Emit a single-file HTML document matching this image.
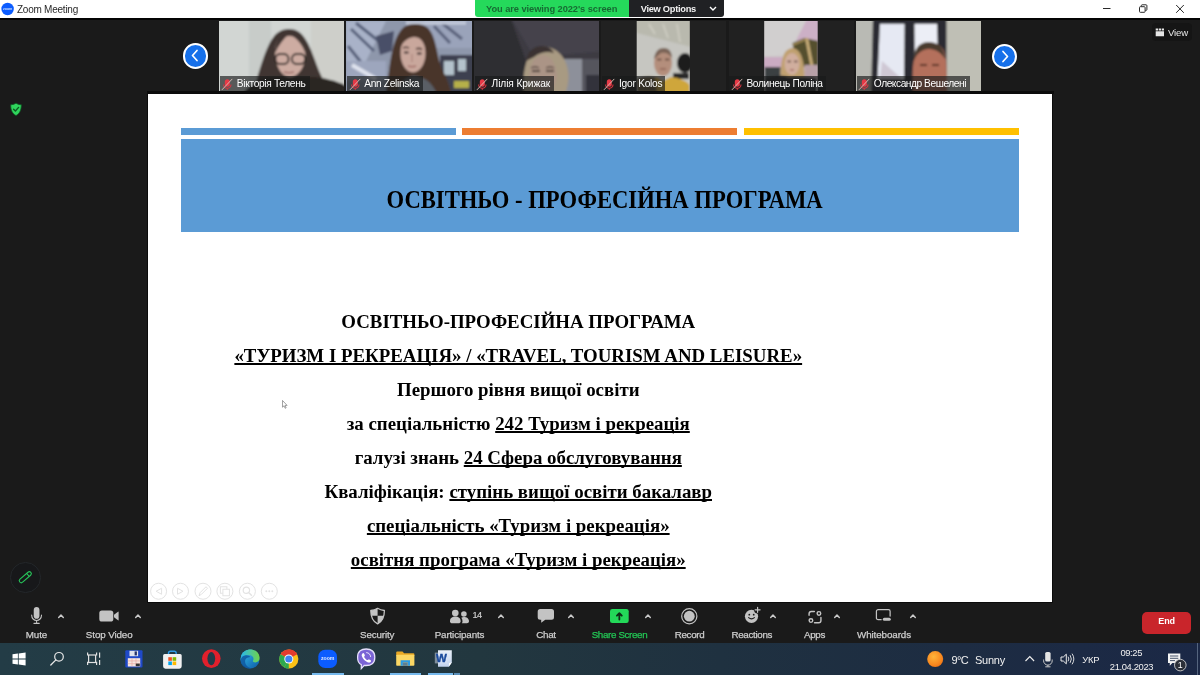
<!DOCTYPE html>
<html lang="uk">
<head>
<meta charset="utf-8">
<title>Zoom Meeting</title>
<style>
*{box-sizing:border-box;margin:0;padding:0}
html,body{width:1200px;height:675px;overflow:hidden;background:#1a1a1a}
body{will-change:transform;position:relative;font-family:"Liberation Sans","DejaVu Sans",sans-serif;color:#fff}
.abs{position:absolute}
#titlebar{left:0;top:0;width:1200px;height:18px;background:#fff;color:#222}
#titlebar .ttl{left:17px;top:3px;font-size:10px;line-height:13px;color:#2a2a2a;white-space:nowrap}
#banner{left:475px;top:0;width:154px;height:16.7px;background:#25d95b;border-radius:0 0 0 3px;color:#176a33;font-weight:bold;font-size:9.3px;line-height:18.2px;padding-left:11px;white-space:nowrap}
#viewopt{left:629px;top:0;width:94.5px;height:16.5px;background:#202124;border-radius:0 0 3px 0;color:#f2f2f2;font-weight:bold;font-size:9.3px;line-height:18.4px;white-space:nowrap;padding-left:11.7px}
#strip{left:0;top:18px;width:1200px;height:76px;background:#1a1a1a}
.tile{top:20.6px;width:126px;height:70.6px;background:#212121;overflow:hidden}
.tile svg{position:absolute;left:0;top:0}
.nm{position:absolute;left:.8px;top:55.4px;height:14.6px;background:rgba(24,26,26,.66);color:#fff;font-size:10.2px;line-height:16.8px;padding:0 0 0 17px;white-space:nowrap;overflow:hidden}
.nm svg{position:absolute;left:1.4px;top:1.6px}
.navb{width:25.4px;height:25.4px;border-radius:50%;background:#1670ea;border:2.2px solid #fff}
#slide{left:148px;top:94px;width:904px;height:508px;background:#fff;color:#000;outline:1.5px solid #0b0b0b;font-family:"Liberation Serif","DejaVu Serif",serif;font-weight:bold}
#slide .bar{position:absolute;top:34px;height:7px}
#hdr{position:absolute;left:33px;top:45px;width:838px;height:93px;background:#5b9bd5}
#hdr span{position:absolute;left:205.5px;top:48px;font-size:22.65px;line-height:28px;white-space:nowrap;transform:scaleY(1.1);transform-origin:50% 80%}
.ln{position:absolute;left:0;width:740.5px;margin-top:.4px;text-align:center;font-size:18.86px;line-height:24px;white-space:nowrap}
.ln u{text-decoration-thickness:1.6px;text-underline-offset:1.2px;text-decoration-skip-ink:none}
#tb{left:0;top:603px;width:1200px;height:39px;background:#1a1a1a}
.tbl{position:absolute;top:628px;font-size:9.8px;line-height:13px;color:#d2d2d2;white-space:nowrap;transform:translateX(-50%);-webkit-text-stroke:.25px currentColor}
#task{left:0;top:643px;width:1200px;height:32px;background:linear-gradient(90deg,#233c46 0%,#22373f 40%,#1f3140 60%,#1d2c42 80%,#1b2846 100%)}
#end{left:1142.4px;top:612.4px;width:48.3px;height:21.3px;border-radius:5px;background:#c9252b;color:#fff;font-weight:bold;font-size:9px;line-height:19.6px;text-align:center;letter-spacing:-.2px}
.tray{color:#f1f1f1;white-space:nowrap}
</style>
</head>
<body>
<!-- title bar -->
<div id="titlebar" class="abs">
  <svg class="abs" style="left:1px;top:2px" width="14" height="14" viewBox="0 0 14 14"><circle cx="6.6" cy="7" r="6.2" fill="#0b5cff"/><text x="6.6" y="8.2" font-size="3.6" font-family="Liberation Sans, sans-serif" font-weight="bold" fill="#cfe0ff" text-anchor="middle">zoom</text></svg>
  <div class="abs ttl"><span style="letter-spacing:-0.243px">Zoom Meeting</span></div>
  <svg class="abs" style="left:1095px;top:0" width="105" height="18" viewBox="0 0 105 18"><g stroke="#2a2a2a" stroke-width="1" fill="none"><path d="M8 8.5h7.5"/><rect x="44.5" y="6.7" width="5.6" height="5.6" rx=".8"/><path d="M46.3 6.5V5.6a.8.8 0 0 1 .8-.8h4a.8.8 0 0 1 .8.8v4a.8.8 0 0 1-.8.8h-.8"/><path d="M81.2 5l7.6 7.8M88.8 5l-7.6 7.8"/></g></svg>
</div>
<div id="banner" class="abs"><span style="letter-spacing:-0.069px">You are viewing 2022's screen</span></div>
<div id="viewopt" class="abs"><span style="letter-spacing:-0.285px">View Options</span><svg class="abs" style="left:80px;top:6px" width="8" height="6" viewBox="0 0 8 6"><path d="M1 1l3 3 3-3" stroke="#fff" stroke-width="1.4" fill="none"/></svg></div>

<!-- video strip -->
<div id="strip" class="abs"></div><div class="abs" style="left:0;top:18px;width:1200px;height:2.2px;background:#040404"></div><div class="abs" style="left:146.5px;top:91.2px;width:907px;height:3px;background:#0b0b0b"></div>
<div class="abs" style="left:1151.5px;top:23px;width:40.5px;height:18px;border-radius:4px;background:#151515"></div>
<svg class="abs" style="left:1155px;top:28px" width="10" height="9" viewBox="0 0 10 9"><path d="M.7.6h2.3v1.9H.7zM3.7.600h2.3v1.9H3.7zM6.7.600h2.3v1.9H6.7zM.7 3.2h8.3v5H.7z" fill="#e6e6e6"/></svg>
<div class="abs" style="left:1168px;top:26px;font-size:9.6px;line-height:13px;color:#e8e8e8;white-space:nowrap"><span style="letter-spacing:-0.156px">View</span></div>
<div class="abs navb" style="left:183px;top:43.4px"><svg class="abs" style="left:5px;top:4px" width="10" height="13" viewBox="0 0 10 13"><path d="M7 1.5L2.5 6.5 7 11.5" stroke="#fff" stroke-width="1.7" fill="none" stroke-linecap="round" stroke-linejoin="round"/></svg></div>
<div class="abs navb" style="left:992px;top:43.5px"><svg class="abs" style="left:6px;top:4px" width="10" height="13" viewBox="0 0 10 13"><path d="M3 1.5L7.5 6.5 3 11.5" stroke="#fff" stroke-width="1.7" fill="none" stroke-linecap="round" stroke-linejoin="round"/></svg></div>

<div class="abs tile" style="left:219px;width:125.2px"><svg width="126" height="71" viewBox="0 0 126 71"><defs><filter id="bl0" x="-10%" y="-10%" width="120%" height="120%"><feGaussianBlur stdDeviation="1.3"/></filter><clipPath id="cp0"><rect x="0" y="0" width="126" height="71"/></clipPath></defs><g clip-path="url(#cp0)"><g filter="url(#bl0)"><rect x="-5" y="-5" width="136" height="81" fill="#d2d6d3"/><rect x="30" y="-5" width="22" height="81" fill="#c8ccc9"/><rect x="92" y="-5" width="40" height="81" fill="#cecfca"/>
<path d="M34 71C40 52 46 26 56 14 62 7 74 6 80 11 92 20 96 44 104 58L130 68V80H20z" fill="#3f3431"/>
<path d="M20 78C30 62 42 58 52 56H96C112 58 124 62 132 68V80H20z" fill="#2a2524"/>
<path d="M56 30C56 20 62 15 70 15 79 15 86 21 86.5 32 87 44 80 56 71 56 62 56 56 44 56 30z" fill="#cdaca2"/>
<path d="M56 32C56 20 62 13 70 13 64 18 60 24 56 32zM70 13C80 13 87 22 87 34 84 24 78 17 70 13z" fill="#3f3431"/>
<rect x="56.5" y="33" width="13" height="10" rx="4.5" fill="none" stroke="#2c2523" stroke-width="1.8"/><rect x="73" y="33" width="13" height="10" rx="4.5" fill="none" stroke="#2c2523" stroke-width="1.8"/>
<path d="M65 51q5 1.5 10 0" stroke="#9a6a66" stroke-width="1.5" fill="none"/></g></g></svg><div class="nm" style="width:90px"><svg width="13" height="13" viewBox="0 0 13 13"><rect x="3.8" y="1.3" width="5" height="7.4" rx="2.5" fill="#e63946"/><path d="M2.6 6.5a3.7 3.7 0 0 0 7.4 0" stroke="#d8343f" stroke-width="1.1" fill="none"/><path d="M6.3 10.2v1.6" stroke="#d8343f" stroke-width="1.2"/><path d="M11 1.2L1.2 11.6" stroke="#dcc4bc" stroke-width=".9" stroke-linecap="round"/></svg><span style="letter-spacing:-0.337px">Вікторія Телень</span></div></div>
<div class="abs tile" style="left:346.4px;width:125.2px"><svg width="126" height="71" viewBox="0 0 126 71"><defs><filter id="bl1" x="-10%" y="-10%" width="120%" height="120%"><feGaussianBlur stdDeviation="1.3"/></filter><clipPath id="cp1"><rect x="0" y="0" width="126" height="71"/></clipPath></defs><g clip-path="url(#cp1)"><g filter="url(#bl1)"><rect x="-5" y="-5" width="136" height="81" fill="#8e97ab"/>
<path d="M0 0h40L20 40 0 55z" fill="#a9b2c8"/><path d="M5 8L28 30M10 2L35 22M2 25L22 50" stroke="#56607a" stroke-width="3"/>
<path d="M30 15L48 10 46 30 34 34z" fill="#4a4f68"/><rect x="78" y="-3" width="50" height="30" fill="#9aa3ba"/><path d="M88 5L104 22M96 2L116 18" stroke="#5a627c" stroke-width="3"/>
<rect x="0" y="40" width="40" height="20" fill="#9da6bd"/><path d="M6 44L30 58" stroke="#dfe3ee" stroke-width="4"/><path d="M60 2L120 2" stroke="#c5ccdc" stroke-width="3"/>
<rect x="94" y="34" width="36" height="40" fill="#3c4150"/><path d="M98 40h10v14h-10zM112 38h8v12h-8z" fill="#b4c2cc"/><rect x="108" y="60" width="15" height="7" fill="#b5b04a"/>
<path d="M40 71C44 50 44 18 58 6 64 2 76 2 82 7 92 18 90 38 98 52 102 60 104 66 106 75H38z" fill="#4a362c"/>
<ellipse cx="67" cy="32" rx="12.5" ry="19.5" fill="#c9a79c"/>
<path d="M54 28C56 14 64 9 72 10 80 12 82 20 80 30 78 20 74 16 68 16 60 17 56 22 54 28z" fill="#4a362c"/>
<path d="M57 27q3-1.5 6 0M70 28q3-1.5 6 .5" stroke="#4a3630" stroke-width="1.6" fill="none"/><path d="M58 31.5h4.5M71 32.5h4.5" stroke="#3a2c2a" stroke-width="1.8"/><path d="M66 33v8" stroke="#b08c82" stroke-width="1.5"/><path d="M62 45q4 1.5 8 0" stroke="#a06a66" stroke-width="1.6" fill="none"/><path d="M52 71C54 60 60 56 68 55 78 56 86 60 92 75H50z" fill="#5a5f66"/></g></g></svg><div class="nm" style="width:75.5px"><svg width="13" height="13" viewBox="0 0 13 13"><rect x="3.8" y="1.3" width="5" height="7.4" rx="2.5" fill="#e63946"/><path d="M2.6 6.5a3.7 3.7 0 0 0 7.4 0" stroke="#d8343f" stroke-width="1.1" fill="none"/><path d="M6.3 10.2v1.6" stroke="#d8343f" stroke-width="1.2"/><path d="M11 1.2L1.2 11.6" stroke="#dcc4bc" stroke-width=".9" stroke-linecap="round"/></svg><span style="letter-spacing:-0.334px">Ann Zelinska</span></div></div>
<div class="abs tile" style="left:473.8px;width:125.2px"><svg width="126" height="71" viewBox="0 0 126 71"><defs><filter id="bl2" x="-10%" y="-10%" width="120%" height="120%"><feGaussianBlur stdDeviation="1.3"/></filter><clipPath id="cp2"><rect x="0" y="0" width="126" height="71"/></clipPath></defs><g clip-path="url(#cp2)"><g filter="url(#bl2)"><rect x="-5" y="-5" width="136" height="81" fill="#3c3a42"/><path d="M-5-5H36L52 40V80H-5z" fill="#2e2d33"/><path d="M36-5H131V30L60 36z" fill="#45434c"/>
<rect x="88" y="38" width="22" height="40" fill="#8d909a"/><rect x="108" y="38" width="23" height="40" fill="#55555d"/><rect x="112" y="54" width="19" height="20" fill="#33323a"/>
<path d="M50 75C48 50 52 30 66 26 80 24 92 34 94 50 96 60 92 70 90 78z" fill="#a89a82"/>
<path d="M52 40C54 30 60 25 68 25 74 25 78 28 80 32 74 30 66 31 60 36z" fill="#3a3330"/>
<ellipse cx="69" cy="54" rx="13.5" ry="20" fill="#ab9486"/><path d="M57 47q4-2 8 0M72 47q4-2 8 0" stroke="#5a4a44" stroke-width="1.3" fill="none"/>
<path d="M58 50h8M72 50h8" stroke="#4a3a36" stroke-width="2"/></g></g></svg><div class="nm" style="width:79px"><svg width="13" height="13" viewBox="0 0 13 13"><rect x="3.8" y="1.3" width="5" height="7.4" rx="2.5" fill="#e63946"/><path d="M2.6 6.5a3.7 3.7 0 0 0 7.4 0" stroke="#d8343f" stroke-width="1.1" fill="none"/><path d="M6.3 10.2v1.6" stroke="#d8343f" stroke-width="1.2"/><path d="M11 1.2L1.2 11.6" stroke="#dcc4bc" stroke-width=".9" stroke-linecap="round"/></svg><span style="letter-spacing:-0.103px">Лілія Крижак</span></div></div>
<div class="abs tile" style="left:601.2px;width:125.2px"><svg width="126" height="71" viewBox="0 0 126 71"><defs><filter id="bl3" x="-10%" y="-10%" width="120%" height="120%"><feGaussianBlur stdDeviation="1.3"/></filter><clipPath id="cp3"><rect x="35.7" y="0" width="53.1" height="71"/></clipPath></defs><g clip-path="url(#cp3)"><g filter="url(#bl3)"><g transform="translate(-2 0)"><rect x="30" y="-5" width="70" height="85" fill="#c6c6c1"/><path d="M30 -5H100V28L30 10z" fill="#b9b9ae"/><path d="M50 3l6 10M64 3l5 14M78 3l3 18" stroke="#d0cfc4" stroke-width="1.5"/>
<ellipse cx="86" cy="42" rx="8" ry="10" fill="#1c1c1e"/><rect x="74" y="52" width="16" height="6" fill="#2a2a2c"/>
<ellipse cx="64" cy="42" rx="9" ry="13" fill="#b48e7c"/><path d="M55 38C56 30 60 27 65 27 70 27 73 31 73 37 70 32 66 31 62 32z" fill="#7a6456"/>
<path d="M58 38.5h4.5M66 38.5h4.5" stroke="#5a4036" stroke-width="1.5"/><path d="M61 48h6" stroke="#8a5a50" stroke-width="1.3"/><path d="M38 71V60C44 56 52 56 58 56L64 60 72 56C80 57 88 60 90.5 64V75z" fill="#cfa63a"/><path d="M38 71V58C44 55 50 55 56 56L58 71z" fill="#6a5a3a"/></g></g></g></svg><div class="nm" style="width:63.5px"><svg width="13" height="13" viewBox="0 0 13 13"><rect x="3.8" y="1.3" width="5" height="7.4" rx="2.5" fill="#e63946"/><path d="M2.6 6.5a3.7 3.7 0 0 0 7.4 0" stroke="#d8343f" stroke-width="1.1" fill="none"/><path d="M6.3 10.2v1.6" stroke="#d8343f" stroke-width="1.2"/><path d="M11 1.2L1.2 11.6" stroke="#dcc4bc" stroke-width=".9" stroke-linecap="round"/></svg><span style="letter-spacing:-0.248px">Igor Kolos</span></div></div>
<div class="abs tile" style="left:728.6px;width:125.2px"><svg width="126" height="71" viewBox="0 0 126 71"><defs><filter id="bl4" x="-10%" y="-10%" width="120%" height="120%"><feGaussianBlur stdDeviation="1.3"/></filter><clipPath id="cp4"><rect x="35.2" y="0" width="53.5" height="71"/></clipPath></defs><g clip-path="url(#cp4)"><g filter="url(#bl4)"><g transform="translate(-2.5 0)"><rect x="30" y="-5" width="70" height="85" fill="#cbc7c8"/><path d="M72 -5H100V40L80 40 70 20z" fill="#ccb0c6"/><path d="M30 36H56V48H30z" fill="#cbabc2"/><path d="M30 -5H82L62 34 30 36z" fill="#d1cfcf"/>
<path d="M66 22L78 17 92 20V46H70z" fill="#55502f"/><path d="M80 17L88 58" stroke="#c8ac78" stroke-width="3"/><path d="M66 24L80 18" stroke="#a88f58" stroke-width="1.6"/><rect x="78" y="44" width="14" height="14" fill="#b9a0a8"/>
<rect x="38" y="46" width="16" height="12" fill="#3a4042"/>
<path d="M54 60C54 40 56 28 66 27 76 28 78 44 78 58z" fill="#c0a070"/>
<ellipse cx="65.5" cy="43" rx="7.5" ry="11" fill="#d0ae9e"/><path d="M61 40.5h3.5M67.5 40.5h3.5" stroke="#5a4038" stroke-width="1.3"/><path d="M63.5 49h4" stroke="#a0605c" stroke-width="1.3"/>
<path d="M38 75V58C46 54 56 54 62 56L70 56C78 56 86 56 90.5 58V75z" fill="#2c2c2e"/></g></g></g></svg><div class="nm" style="width:96.8px"><svg width="13" height="13" viewBox="0 0 13 13"><rect x="3.8" y="1.3" width="5" height="7.4" rx="2.5" fill="#e63946"/><path d="M2.6 6.5a3.7 3.7 0 0 0 7.4 0" stroke="#d8343f" stroke-width="1.1" fill="none"/><path d="M6.3 10.2v1.6" stroke="#d8343f" stroke-width="1.2"/><path d="M11 1.2L1.2 11.6" stroke="#dcc4bc" stroke-width=".9" stroke-linecap="round"/></svg><span style="letter-spacing:-0.34px">Волинець Поліна</span></div></div>
<div class="abs tile" style="left:856px;width:125.2px"><svg width="126" height="71" viewBox="0 0 126 71"><defs><filter id="bl5" x="-10%" y="-10%" width="120%" height="120%"><feGaussianBlur stdDeviation="1.3"/></filter><clipPath id="cp5"><rect x="0" y="0" width="126" height="71"/></clipPath></defs><g clip-path="url(#cp5)"><g filter="url(#bl5)"><rect x="-5" y="-5" width="136" height="81" fill="#b5b5ad"/><rect x="88" y="-5" width="45" height="81" fill="#bfbfb5"/><rect x="0" y="-5" width="20" height="81" fill="#b9bab4"/>
<path d="M17 -5H90.5V76H15z" fill="#2b2b31"/><path d="M24 3H48.5L48 58H21.5z" fill="#e6e9f3"/><path d="M58.5 3H81L82.5 58H59z" fill="#eceef6"/>
<path d="M26 40L46 58H24z" fill="#cfc8d4"/>
<path d="M57 75C56 50 56 30 66 24 74 20 84 22 88 30 92 40 90 60 92 78z" fill="#b4705c"/>
<path d="M58 40C58 28 62 22 72 21 82 21 88 26 89 38 84 30 78 28 72 28 64 29 60 34 58 40z" fill="#4a3a2e"/>
<path d="M64 44h7M76 44h7" stroke="#5a3028" stroke-width="1.8"/></g></g></svg><div class="nm" style="width:113.5px"><svg width="13" height="13" viewBox="0 0 13 13"><rect x="3.8" y="1.3" width="5" height="7.4" rx="2.5" fill="#e63946"/><path d="M2.6 6.5a3.7 3.7 0 0 0 7.4 0" stroke="#d8343f" stroke-width="1.1" fill="none"/><path d="M6.3 10.2v1.6" stroke="#d8343f" stroke-width="1.2"/><path d="M11 1.2L1.2 11.6" stroke="#dcc4bc" stroke-width=".9" stroke-linecap="round"/></svg><span style="letter-spacing:-0.449px">Олександр Вешелені</span></div></div>

<!-- shared slide -->
<div id="slide" class="abs">
  <div class="bar" style="left:33px;width:275px;background:#5b9bd5"></div>
  <div class="bar" style="left:314px;width:275px;background:#ed7d31"></div>
  <div class="bar" style="left:596px;width:275px;background:#ffc000"></div>
  <div id="hdr"><span>ОСВІТНЬО - ПРОФЕСІЙНА ПРОГРАМА</span></div>
  <div class="ln" style="top:216px">ОСВІТНЬО-ПРОФЕСІЙНА ПРОГРАМА</div>
  <div class="ln" style="top:250px"><u>«ТУРИЗМ І РЕКРЕАЦІЯ» / «TRAVEL, TOURISM AND LEISURE»</u></div>
  <div class="ln" style="top:284px">Першого рівня вищої освіти</div>
  <div class="ln" style="top:318px">за спеціальністю <u>242 Туризм і рекреація</u></div>
  <div class="ln" style="top:352px">галузі знань <u>24 Сфера обслуговування</u></div>
  <div class="ln" style="top:386px">Кваліфікація: <u>ступінь вищої освіти бакалавр</u></div>
  <div class="ln" style="top:420px"><u>спеціальність «Туризм і рекреація»</u></div>
  <div class="ln" style="top:454px"><u>освітня програма «Туризм і рекреація»</u></div>
  <svg style="position:absolute;left:0;top:488px" width="135" height="19" viewBox="0 0 135 19"><g transform="translate(10.6 9.25)"><circle r="8" fill="none" stroke="#e3e3e3" stroke-width="1"/><path d="M2.5 0L-3 -3V3z" fill="none" stroke="#e3e3e3" stroke-width="1" transform="scale(-1 1)"/></g><g transform="translate(32.5 9.25)"><circle r="8" fill="none" stroke="#e3e3e3" stroke-width="1"/><path d="M2.5 0L-3 -3V3z" fill="none" stroke="#e3e3e3" stroke-width="1"/></g><g transform="translate(55 9.25)"><circle r="8" fill="none" stroke="#e3e3e3" stroke-width="1"/><path d="M-4 4.5L-3 1.5 3 -4.5 4.5 -3 -1.5 3z" fill="none" stroke="#e3e3e3" stroke-width="1"/></g><g transform="translate(76.9 9.25)"><circle r="8" fill="none" stroke="#e3e3e3" stroke-width="1"/><rect x="-4.5" y="-4.5" width="6.5" height="6.5" fill="none" stroke="#e3e3e3" stroke-width="1"/><rect x="-2" y="-2" width="6.5" height="6.5" fill="#fff" stroke="#e3e3e3" stroke-width="1"/></g><g transform="translate(99.4 9.25)"><circle r="8" fill="none" stroke="#e3e3e3" stroke-width="1"/><circle cx="-1" cy="-1" r="3.2" fill="none" stroke="#e3e3e3" stroke-width="1.2"/><path d="M1.5 1.5L4.5 4.5" stroke="#e3e3e3" stroke-width="1.4"/></g><g transform="translate(121.3 9.25)"><circle r="8" fill="none" stroke="#e3e3e3" stroke-width="1"/><circle cx="-3" cy="0" r="1" fill="#e3e3e3"/><circle cx="0" cy="0" r="1" fill="#e3e3e3"/><circle cx="3" cy="0" r="1" fill="#e3e3e3"/></g></svg>
</div>

<svg class="abs" style="left:9px;top:102px" width="14" height="15" viewBox="0 0 14 15"><path d="M7 1.2c1.6 1 3.4 1.5 5.3 1.6 0 5-1.4 8.6-5.3 10.8C3.1 11.4 1.7 7.8 1.7 2.8 3.6 2.7 5.4 2.2 7 1.2z" fill="#2fd45c" stroke="#0f5a24" stroke-width=".8"/><path d="M4.6 7.2l1.8 1.8 3.2-3.6" stroke="#0c5a22" stroke-width="1.4" fill="none" stroke-linecap="round" stroke-linejoin="round"/></svg>
<div class="abs" style="left:10px;top:562px;width:30.6px;height:30.6px;border-radius:50%;background:#17181a;border:1px solid #23272a"></div>
<svg class="abs" style="left:17px;top:569px" width="17" height="17" viewBox="0 0 17 17"><g transform="rotate(-41 8.3 8.2)"><rect x="1" y="6.2" width="14.6" height="4" rx="2" fill="none" stroke="#27c45a" stroke-width="1.1"/><path d="M11.8 6.2v4" stroke="#27c45a" stroke-width="1"/></g></svg>
<svg class="abs" style="left:281.7px;top:400px" width="6.3" height="9.4" viewBox="0 0 8 12"><path d="M.6.6v8.6l2-1.8 1.4 3.2 1.3-.6-1.4-3.1h2.6z" fill="#fff" stroke="#555" stroke-width=".7" stroke-linejoin="round"/></svg>
<!-- zoom toolbar -->
<div id="tb" class="abs"></div>
<svg class="abs" style="left:28.8px;top:605px" width="15.2" height="20.4" viewBox="0 0 17 21" preserveAspectRatio="none"><rect x="5.3" y="2" width="6.4" height="12.2" rx="3.2" fill="#c3c3c3"/><path d="M3 10.5a5.5 5.5 0 0 0 11 0" stroke="#c3c3c3" stroke-width="1.2" fill="none" stroke-linecap="round"/><path d="M8.5 16v2.6M5.5 18.9h6" stroke="#c3c3c3" stroke-width="1.2" fill="none" stroke-linecap="round"/></svg>
<svg class="abs" style="left:56.7px;top:613.3px" width="8" height="6" viewBox="0 0 8 6"><path d="M1.7 4.5L4 2.1 6.3 4.5" stroke="#c9c9c9" stroke-width="1.5" fill="none" stroke-linecap="round" stroke-linejoin="round"/></svg>
<svg class="abs" style="left:98px;top:608px" width="22" height="16" viewBox="0 0 22 16"><rect x="1.3" y="2.5" width="14" height="11.1" rx="2.6" fill="#c3c3c3"/><path d="M16 6.8l4-3.1q.6-.4.6.4v7.8q0 .8-.6.4l-4-3.1z" fill="#c3c3c3"/></svg>
<svg class="abs" style="left:133.8px;top:613.3px" width="8" height="6" viewBox="0 0 8 6"><path d="M1.7 4.5L4 2.1 6.3 4.5" stroke="#c9c9c9" stroke-width="1.5" fill="none" stroke-linecap="round" stroke-linejoin="round"/></svg>
<svg class="abs" style="left:369px;top:607px" width="18" height="18" viewBox="0 0 18 18"><path d="M8.6 1.3c2 1.3 4.2 2 6.8 2.2 0 6.2-1.8 10.9-6.8 13.4C3.6 14.4 1.8 9.7 1.8 3.5 4.4 3.3 6.6 2.6 8.6 1.3z" fill="#1a1a1a" stroke="#c3c3c3" stroke-width="1.3" stroke-linejoin="round"/><path d="M8.6 1.3C6.6 2.6 4.4 3.3 1.8 3.5c0 1.9.2 3.7.6 5.3H8.6z" fill="#c3c3c3"/><path d="M8.6 8.8h6.2c-.8 3.6-2.7 6.4-6.2 8.1z" fill="#c3c3c3"/></svg>
<svg class="abs" style="left:449px;top:608px" width="22" height="17" viewBox="0 0 22 17"><circle cx="6.3" cy="5" r="3.3" fill="#c3c3c3"/><path d="M1 13.2c0-3 2.3-4.6 5.3-4.6s5.3 1.6 5.3 4.6c0 1.3-1 2.1-2.2 2.1H3.2C2 15.3 1 14.5 1 13.2z" fill="#c3c3c3"/><circle cx="14.9" cy="6" r="2.8" fill="#c3c3c3"/><path d="M12.8 15.3c.5-.6.7-1.3.7-2.1 0-1.4-.4-2.6-1.2-3.5.8-.4 1.7-.6 2.6-.6 2.8 0 5.1 1.5 5.1 4.2 0 1.2-.9 2-2.1 2z" fill="#c3c3c3"/></svg>
<div class="abs" style="left:472.5px;top:608.5px;font-size:9.2px;line-height:12px;color:#cdcdcd;letter-spacing:-.55px;-webkit-text-stroke:.2px #cdcdcd">14</div>
<svg class="abs" style="left:496.6px;top:613.3px" width="8" height="6" viewBox="0 0 8 6"><path d="M1.7 4.5L4 2.1 6.3 4.5" stroke="#c9c9c9" stroke-width="1.5" fill="none" stroke-linecap="round" stroke-linejoin="round"/></svg>
<svg class="abs" style="left:536px;top:607px" width="20" height="18" viewBox="0 0 20 18"><path d="M4.2 2h11.3a2.5 2.5 0 0 1 2.5 2.5v5.8a2.5 2.5 0 0 1-2.5 2.5H9.3L5.2 15.8v-3H4.2a2.5 2.5 0 0 1-2.5-2.5V4.5A2.5 2.5 0 0 1 4.2 2z" fill="#c3c3c3"/></svg>
<svg class="abs" style="left:567.3px;top:613.3px" width="8" height="6" viewBox="0 0 8 6"><path d="M1.7 4.5L4 2.1 6.3 4.5" stroke="#c9c9c9" stroke-width="1.5" fill="none" stroke-linecap="round" stroke-linejoin="round"/></svg>
<svg class="abs" style="left:609px;top:608px" width="21" height="16" viewBox="0 0 21 16"><rect x="1" y="1" width="18.7" height="14" rx="2.3" fill="#23d959"/><path d="M10.35 11.6V5.4M7.9 7.7l2.45-2.5 2.45 2.5" stroke="#102f18" stroke-width="1.8" fill="none" stroke-linecap="round" stroke-linejoin="round"/></svg>
<svg class="abs" style="left:644.3px;top:613.3px" width="8" height="6" viewBox="0 0 8 6"><path d="M1.7 4.5L4 2.1 6.3 4.5" stroke="#c9c9c9" stroke-width="1.5" fill="none" stroke-linecap="round" stroke-linejoin="round"/></svg>
<svg class="abs" style="left:680px;top:607px" width="19" height="19" viewBox="0 0 19 19"><circle cx="9.3" cy="9.2" r="7.6" fill="none" stroke="#c3c3c3" stroke-width="1.2"/><circle cx="9.3" cy="9.2" r="5.4" fill="#c3c3c3"/></svg>
<svg class="abs" style="left:743px;top:605px" width="20" height="20" viewBox="0 0 20 20"><circle cx="8.5" cy="11.3" r="6.6" fill="#c3c3c3"/><circle cx="6.3" cy="9.7" r=".9" fill="#1a1a1a"/><circle cx="10.7" cy="9.7" r=".9" fill="#1a1a1a"/><path d="M5.6 12.6q2.9 2.6 5.8 0" stroke="#1a1a1a" stroke-width="1.1" fill="none" stroke-linecap="round"/><circle cx="14.6" cy="4.8" r="3.6" fill="#1a1a1a"/><path d="M14.6 2.3v5M12.1 4.8h5" stroke="#c3c3c3" stroke-width="1.2" stroke-linecap="round"/></svg>
<svg class="abs" style="left:768.9px;top:613.3px" width="8" height="6" viewBox="0 0 8 6"><path d="M1.7 4.5L4 2.1 6.3 4.5" stroke="#c9c9c9" stroke-width="1.5" fill="none" stroke-linecap="round" stroke-linejoin="round"/></svg>
<svg class="abs" style="left:806.5px;top:609px" width="16" height="16" viewBox="0 0 17 16"><g stroke="#c3c3c3" stroke-width="1.5" fill="none" stroke-linecap="round"><path d="M2.2 6.2V4.6a2.4 2.4 0 0 1 2.4-2.4h3.2"/><path d="M14.8 8.5v3.2a2.4 2.4 0 0 1-2.4 2.4H8"/><circle cx="12.7" cy="4.2" r="1.9"/><circle cx="4.2" cy="11.8" r="1.9"/></g></svg>
<svg class="abs" style="left:832.7px;top:613.3px" width="8" height="6" viewBox="0 0 8 6"><path d="M1.7 4.5L4 2.1 6.3 4.5" stroke="#c9c9c9" stroke-width="1.5" fill="none" stroke-linecap="round" stroke-linejoin="round"/></svg>
<svg class="abs" style="left:875.3px;top:608.3px" width="17" height="14.2" viewBox="0 0 18 15"><path d="M6.5 12.3H3.3a1.8 1.8 0 0 1-1.8-1.8V3.5a1.8 1.8 0 0 1 1.8-1.8h10.9a1.8 1.8 0 0 1 1.8 1.8v5" stroke="#c3c3c3" stroke-width="1.3" fill="none" stroke-linecap="round"/><rect x="8.3" y="10.3" width="8.4" height="3.2" rx="1.6" fill="#c3c3c3"/></svg>
<svg class="abs" style="left:908.5px;top:613.3px" width="8" height="6" viewBox="0 0 8 6"><path d="M1.7 4.5L4 2.1 6.3 4.5" stroke="#c9c9c9" stroke-width="1.5" fill="none" stroke-linecap="round" stroke-linejoin="round"/></svg>
<div class="tbl" style="left:36.5px;color:#cdcdcd"><span style="letter-spacing:-0.07px">Mute</span></div>
<div class="tbl" style="left:109.2px;color:#cdcdcd"><span style="letter-spacing:-0.107px">Stop Video</span></div>
<div class="tbl" style="left:377.2px;color:#cdcdcd"><span style="letter-spacing:-0.149px">Security</span></div>
<div class="tbl" style="left:459.5px;color:#cdcdcd"><span style="letter-spacing:-0.124px">Participants</span></div>
<div class="tbl" style="left:546px;color:#cdcdcd"><span style="letter-spacing:-0.326px">Chat</span></div>
<div class="tbl" style="left:619.5px;color:#23c655"><span style="letter-spacing:-0.359px">Share Screen</span></div>
<div class="tbl" style="left:689.5px;color:#cdcdcd"><span style="letter-spacing:-0.332px">Record</span></div>
<div class="tbl" style="left:751.8px;color:#cdcdcd"><span style="letter-spacing:-0.309px">Reactions</span></div>
<div class="tbl" style="left:814.5px;color:#cdcdcd"><span style="letter-spacing:-0.336px">Apps</span></div>
<div class="tbl" style="left:884px;color:#cdcdcd"><span style="letter-spacing:-0.091px">Whiteboards</span></div>
<div id="end" class="abs">End</div>

<!-- windows taskbar -->
<div id="task" class="abs"></div>
<svg class="abs" style="left:12px;top:652px" width="14" height="14" viewBox="0 0 14 14"><path d="M.5 2.3L5.9 1.5v5.1H.5zM6.7 1.4L13.6.4v6.2H6.7zM.5 7.4h5.4v5.1L.5 11.7zM6.7 7.4h6.9v6.2L6.7 12.6z" fill="#fff"/></svg>
<svg class="abs" style="left:49px;top:650px" width="17" height="17" viewBox="0 0 17 17"><circle cx="10" cy="6.8" r="4.3" stroke="#e8e8e8" stroke-width="1.2" fill="none"/><path d="M6.9 9.9L1.8 15" stroke="#e8e8e8" stroke-width="1.3" stroke-linecap="round"/></svg>
<svg class="abs" style="left:85px;top:651px" width="18" height="16" viewBox="0 0 18 16"><g stroke="#e0e0e0" stroke-width="1.2" fill="none"><rect x="3.6" y="4" width="7" height="7.5"/><path d="M2.6 1.5v3M2.6 10.8v3.2M11.6 1.5v3M11.6 10.8v3.2M14.6 1.5v5.2M14.6 9v5"/></g></svg>
<svg class="abs" style="left:125px;top:650px" width="18" height="18" viewBox="0 0 18 18"><rect x=".3" y=".2" width="17.2" height="17.3" rx="1" fill="#1f49c8"/><rect x="4.5" y=".8" width="8.6" height="5.4" fill="#dfe3ee"/><rect x="9.6" y="1.4" width="2.3" height="4" fill="#25336b"/><rect x="2.8" y="8.2" width="12.4" height="8.3" fill="#f6e6e0"/><path d="M2.8 10.9h12.4M2.8 13.7h12.4M7 8.2v8.3M11 8.2v8.3" stroke="#e9a9a0" stroke-width=".7"/><rect x="10.8" y="13.6" width="4" height="2.6" fill="#333"/></svg>
<svg class="abs" style="left:162px;top:649px" width="21" height="21" viewBox="0 0 21 21"><path d="M6.5 5.5V4.2a2 2 0 0 1 2-2h3.7a2 2 0 0 1 2 2v1.3" stroke="#2f9ae6" stroke-width="1.4" fill="none"/><path d="M2.6 5h15.6a1.5 1.5 0 0 1 1.5 1.5v10.8a2.4 2.4 0 0 1-2.4 2.4H3.5a2.4 2.4 0 0 1-2.4-2.4V6.5A1.5 1.5 0 0 1 2.6 5z" fill="#f1f1f1"/><rect x="6.3" y="8.2" width="3.6" height="3.6" fill="#f25022"/><rect x="10.6" y="8.2" width="3.6" height="3.6" fill="#7fba00"/><rect x="6.3" y="12.5" width="3.6" height="3.6" fill="#00a4ef"/><rect x="10.6" y="12.5" width="3.6" height="3.6" fill="#ffb900"/></svg>
<svg class="abs" style="left:201px;top:648px" width="21" height="21" viewBox="0 0 21 21"><ellipse cx="10.3" cy="10.6" rx="9.3" ry="9.3" fill="#e2202c"/><ellipse cx="10.3" cy="10.6" rx="3.9" ry="6.6" fill="#223b49"/></svg>
<svg class="abs" style="left:239px;top:648px" width="22" height="22" viewBox="0 0 22 22"><defs><linearGradient id="eg1" x1="0" y1="0" x2="1" y2="1"><stop offset="0" stop-color="#35c1f1"/><stop offset="1" stop-color="#0c59a4"/></linearGradient><linearGradient id="eg2" x1="0" y1="0" x2="1" y2="0"><stop offset="0" stop-color="#2bb8e8"/><stop offset="1" stop-color="#6fd34a"/></linearGradient></defs><circle cx="11" cy="11" r="9.6" fill="url(#eg1)"/><path d="M2 8.5C3.5 3.8 7.3 1.4 11.3 1.4c5 0 9.2 3.7 9.3 8.4 0 3-2 4.6-4.3 4.6-1.5 0-2.5-.6-2.5-1.3 0-.5.7-.9.7-2.3 0-2-1.8-3.8-4.6-3.8C6.3 7 3.4 8 2 8.5z" fill="url(#eg2)"/><path d="M9.2 9.6c-2.2.3-3.3 2.3-3.1 4.3.3 3 2.8 5.7 6.6 6.5-4 1.2-9-1-10.7-5.4C.9 11.8 2.4 8 6.6 7.3c2.4-.3 4 .7 4.5 1.6-.6 0-1.2.4-1.9.7z" fill="#0c4f98" opacity=".75"/></svg>
<svg class="abs" style="left:278px;top:648px" width="22" height="22" viewBox="0 0 22 22"><circle cx="10.8" cy="11" r="9.6" fill="#fbc116"/><path d="M10.8 11L2.5 6.2A9.6 9.6 0 0 1 19.1 6.2z" fill="#e33b2e"/><path d="M10.8 1.4A9.6 9.6 0 0 1 19.1 6.2H10.8z" fill="#e33b2e"/><path d="M2.5 6.2A9.6 9.6 0 0 0 6.2 19.4L10.8 11z" fill="#2da94f"/><path d="M6.2 19.4a9.6 9.6 0 0 0 4.6 1.2l-.1-9.6z" fill="#2da94f"/><circle cx="10.8" cy="11" r="4.5" fill="#fff"/><circle cx="10.8" cy="11" r="3.6" fill="#3f83f1"/></svg>
<svg class="abs" style="left:317px;top:649px" width="21" height="20" viewBox="0 0 21 20"><rect x="1.3" y=".7" width="18.7" height="18.3" rx="6.8" fill="#0b5cff"/><text x="10.65" y="11.3" font-size="5.2" font-family="Liberation Sans, sans-serif" font-weight="bold" fill="#dbe7ff" text-anchor="middle">zoom</text></svg>
<svg class="abs" style="left:355px;top:647px" width="22" height="24" viewBox="0 0 22 24"><path d="M11.2 2c4.7 0 8.6 1.7 8.6 8.2s-3.9 8.3-8.6 8.3c-.7 0-1.4 0-2-.1L6.3 21.6v-3.9C3.8 16.5 2.6 14 2.6 10.2 2.6 3.7 6.5 2 11.2 2z" fill="#7b65d6" stroke="#e6e0fb" stroke-width="1.3"/><path d="M7.6 6.4c.5-.5 1.1-.3 1.4.2l.8 1.4c.2.5 0 .9-.4 1.2-.4.4-.3.8 0 1.3.6 1 1.4 1.8 2.4 2.4.5.3.9.3 1.2-.1.4-.4.8-.5 1.3-.3l1.3.8c.5.3.6.9.2 1.4-.8 1-1.7 1.1-2.8.7C10.1 14.2 7.9 12 6.9 9.2c-.4-1.1-.2-2 .7-2.8z" fill="#fff"/><path d="M11.6 5.6c2.3.2 3.8 1.7 4 4" stroke="#fff" stroke-width=".8" fill="none" stroke-linecap="round"/></svg>
<svg class="abs" style="left:395px;top:650px" width="21" height="17" viewBox="0 0 21 17"><path d="M1.2 2.5a1 1 0 0 1 1-1h5.3l1.6 1.8h9.3a1 1 0 0 1 1 1v1.5H1.2z" fill="#e9a825"/><rect x="1.2" y="4.7" width="18.2" height="11.1" rx=".8" fill="#fbd764"/><path d="M5.6 15.8v-5.6h9.4v5.6h-2.3v-3.3H7.9v3.3z" fill="#2d9be3"/><rect x="7.9" y="12.5" width="4.8" height="3.3" fill="#5d7f95"/></svg>
<svg class="abs" style="left:434px;top:649px" width="19" height="19" viewBox="0 0 19 19"><defs><linearGradient id="wg" x1="0" y1="0" x2="0" y2="1"><stop offset="0" stop-color="#e9eff9"/><stop offset="1" stop-color="#c3d4ee"/></linearGradient></defs><path d="M4 1.2h13.8v12.3l-3 4.3H4z" fill="url(#wg)"/><path d="M17.8 13.5l-3 4.3.3-3.8z" fill="#fff"/><rect x=".8" y="3.6" width="12.4" height="10.8" fill="#dbe6f7" opacity=".5"/><text x="7.4" y="13.2" font-size="11.5" font-family="Liberation Sans, sans-serif" font-weight="bold" fill="#1b4a9c" text-anchor="middle" stroke="#1b4a9c" stroke-width=".4">W</text></svg>
<div class="abs" style="left:312px;top:673px;width:32px;height:2px;background:#76b9ed"></div>
<div class="abs" style="left:389.5px;top:673px;width:31.5px;height:2px;background:#76b9ed"></div>
<div class="abs" style="left:428px;top:673px;width:25px;height:2px;background:#76b9ed"></div>
<div class="abs" style="left:453.5px;top:673px;width:6px;height:2px;background:#5a8fb9"></div>
<svg class="abs" style="left:926px;top:650px" width="18" height="18" viewBox="0 0 18 18"><defs><radialGradient id="sg" cx=".4" cy=".35" r=".75"><stop offset="0" stop-color="#ffb43a"/><stop offset=".7" stop-color="#f8861d"/><stop offset="1" stop-color="#e86a14"/></radialGradient></defs><circle cx="9.2" cy="9.1" r="8" fill="url(#sg)"/></svg>
<div class="abs tray" style="left:951.5px;top:653.2px;font-size:11px;line-height:14px"><span style="letter-spacing:-0.59px">9°C</span></div>
<div class="abs tray" style="left:975px;top:653.2px;font-size:11px;line-height:14px"><span style="letter-spacing:-0.241px">Sunny</span></div>
<svg class="abs" style="left:1024px;top:654px" width="12" height="9" viewBox="0 0 12 9"><path d="M1.5 7L5.8 2.5 10.1 7" stroke="#f0f0f0" stroke-width="1.1" fill="none"/></svg>
<svg class="abs" style="left:1042px;top:651px" width="12" height="17" viewBox="0 0 12 17"><rect x="3.2" y="1" width="5.4" height="9.6" rx="1.6" fill="#e4e4e4"/><path d="M1.6 8.5v1.3a4.3 4.3 0 0 0 8.6 0V8.5" stroke="#c8c8c8" stroke-width="1" fill="none"/><path d="M5.9 14v1.6M3.3 15.8h5.2" stroke="#c8c8c8" stroke-width="1"/></svg>
<svg class="abs" style="left:1060px;top:652px" width="16" height="14" viewBox="0 0 16 14"><path d="M1 5h2.3l3-2.8v9.6l-3-2.8H1z" stroke="#ececec" stroke-width="1" fill="none" stroke-linejoin="round"/><path d="M8.3 5q1.3 2 0 4M10.3 3.5q2.3 3.5 0 7M12.3 2q3.3 5 0 10" stroke="#ececec" stroke-width=".9" fill="none" stroke-linecap="round"/></svg>
<div class="abs tray" style="left:1082.2px;top:653px;font-size:9.4px;line-height:13px"><span style="letter-spacing:-0.224px">УКР</span></div>
<div class="abs tray" style="left:1120.4px;top:646px;font-size:9.4px;line-height:13px"><span style="letter-spacing:-0.354px">09:25</span></div>
<div class="abs tray" style="left:1109.8px;top:660px;font-size:9.4px;line-height:13px"><span style="letter-spacing:-0.362px">21.04.2023</span></div>
<svg class="abs" style="left:1166px;top:652px" width="22" height="20" viewBox="0 0 22 20"><path d="M2 1.5h12.3v9.6H6.3L3.8 13.8v-2.7H2z" fill="#f4f4f4"/><path d="M4 4h8.3M4 6.3h8.3M4 8.6h5" stroke="#1d2c47" stroke-width=".8"/><circle cx="14.3" cy="13.1" r="5.8" fill="#2b2f38" stroke="#cfcfcf" stroke-width=".9"/><text x="14.3" y="16.3" font-size="8.8" font-family="Liberation Sans, sans-serif" fill="#fff" text-anchor="middle">1</text></svg>
<div class="abs" style="left:1196.5px;top:643px;width:1px;height:32px;background:#55657f"></div>
</body>
</html>
